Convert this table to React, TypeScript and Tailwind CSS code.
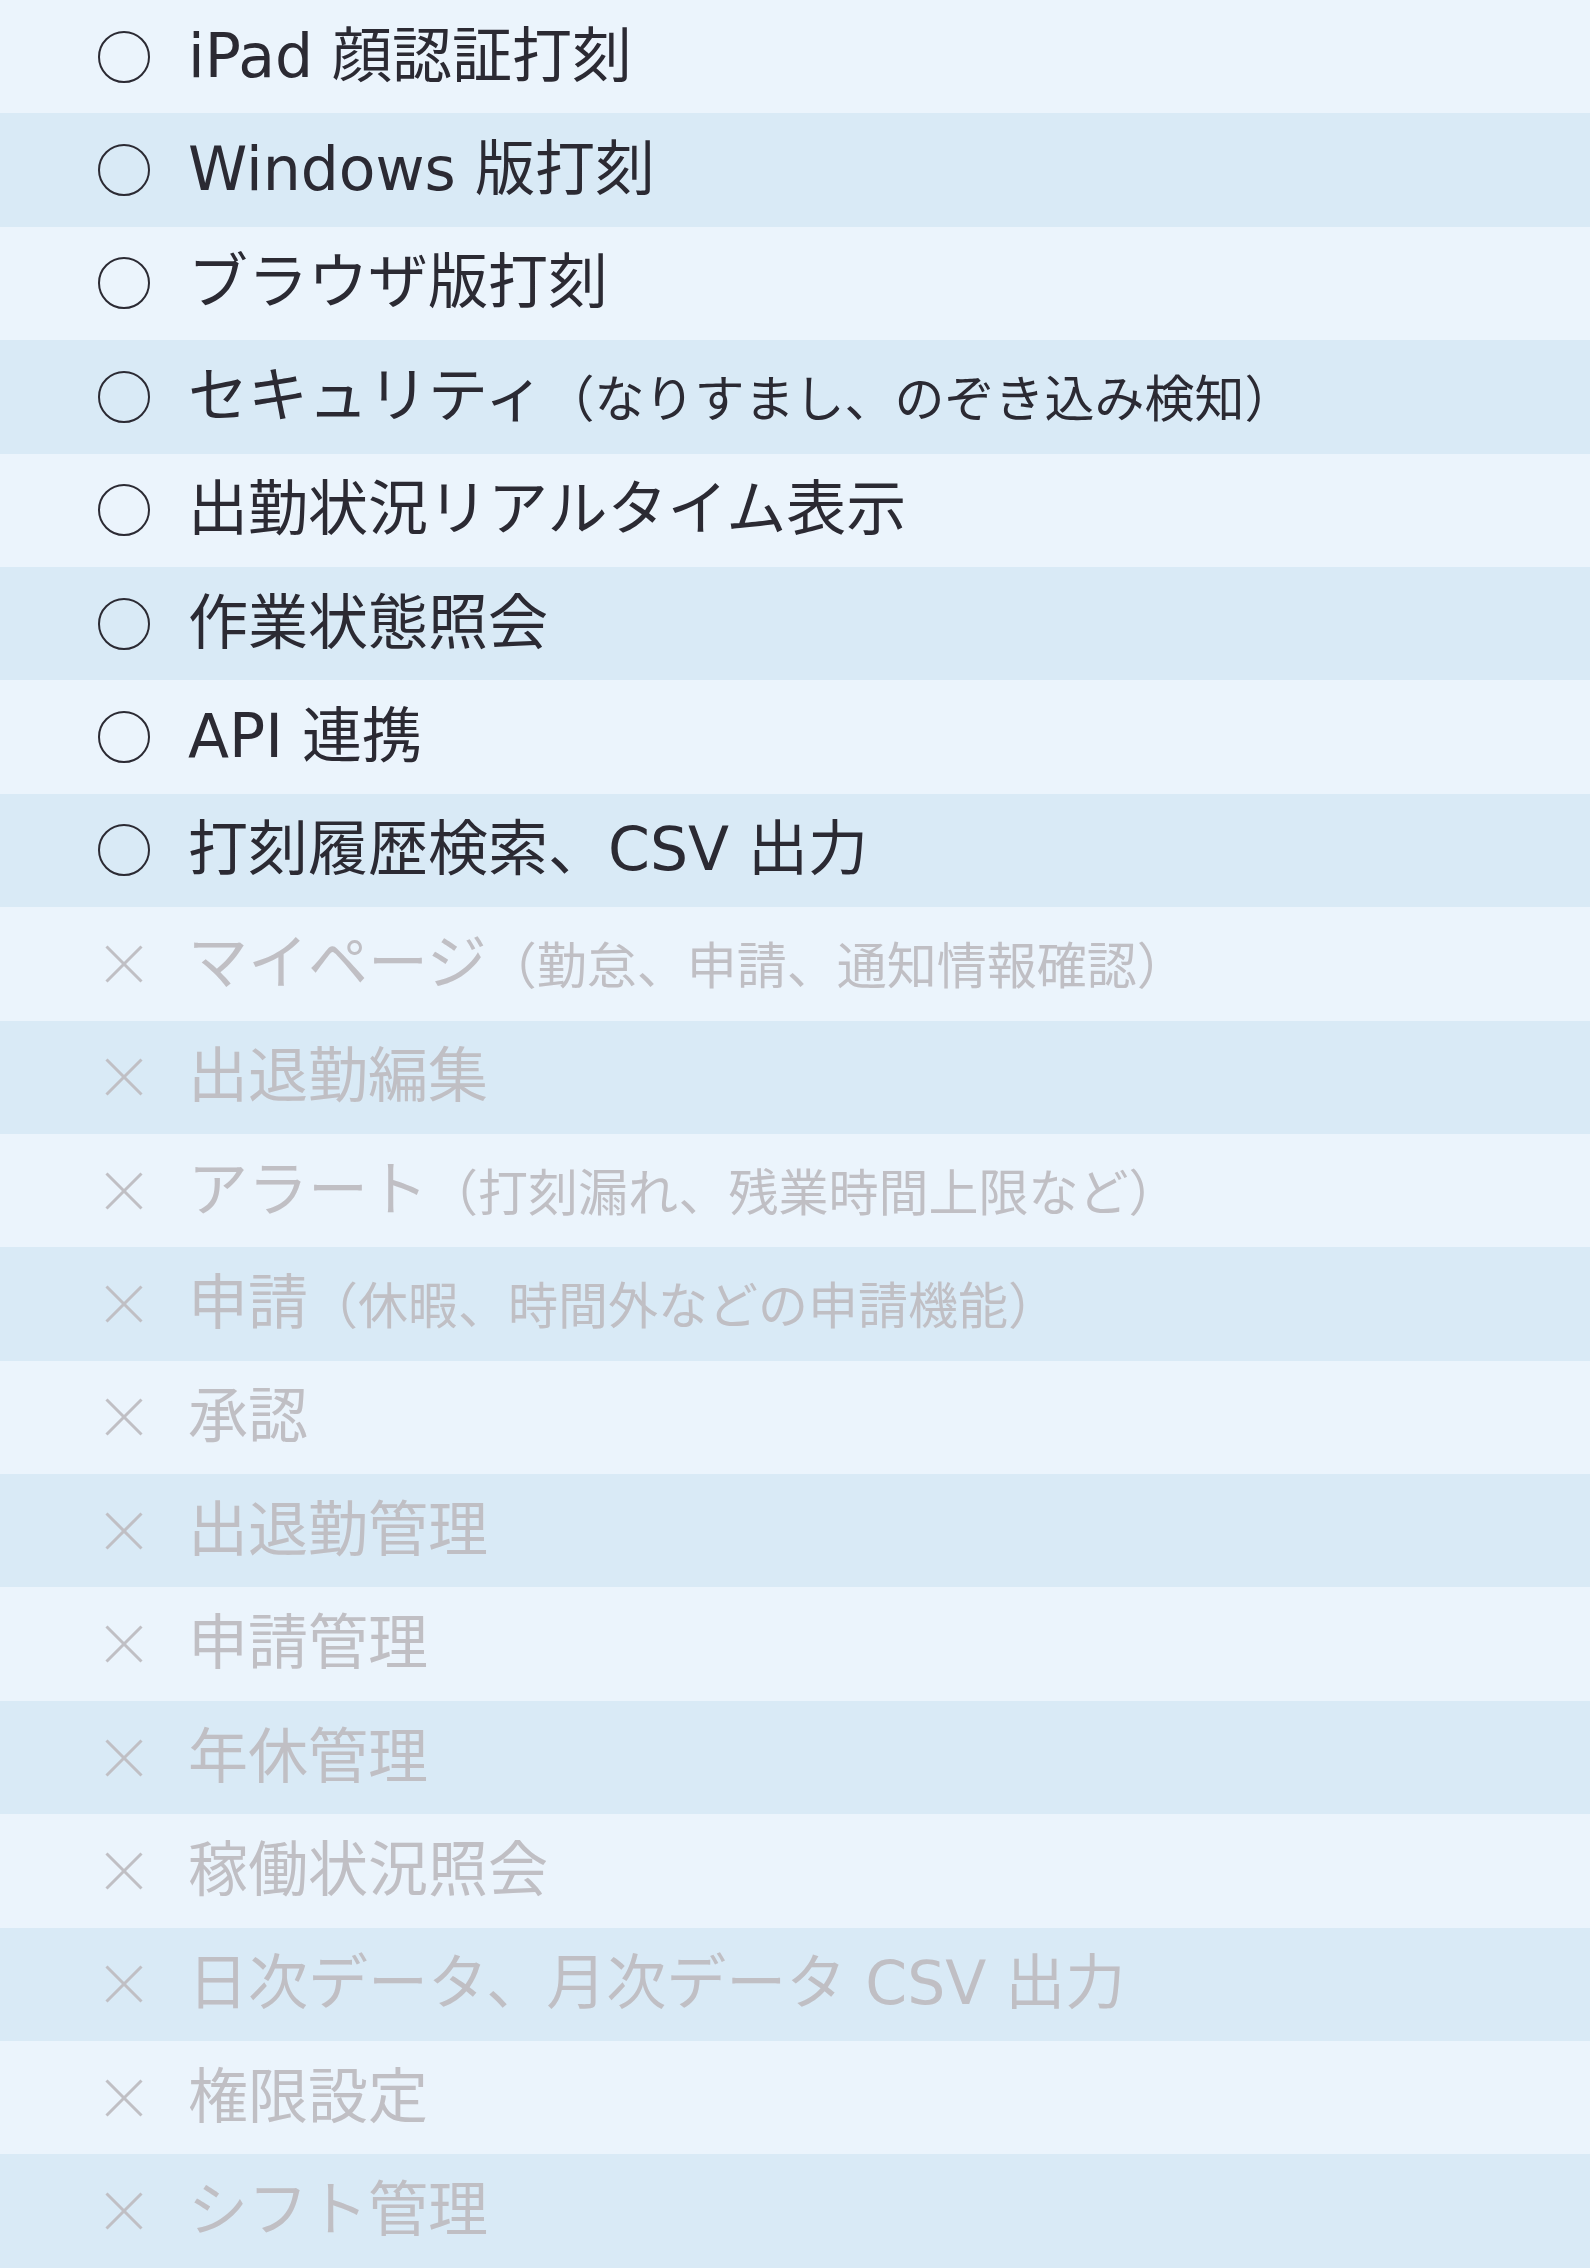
import React from "react";

type Item = { ok: boolean; main: string; sub?: string };

const items: Item[] = [
  { ok: true, main: "iPad 顔認証打刻" },
  { ok: true, main: "Windows 版打刻" },
  { ok: true, main: "ブラウザ版打刻" },
  { ok: true, main: "セキュリティ", sub: "（なりすまし、のぞき込み検知）" },
  { ok: true, main: "出勤状況リアルタイム表示" },
  { ok: true, main: "作業状態照会" },
  { ok: true, main: "API 連携" },
  { ok: true, main: "打刻履歴検索、CSV 出力" },
  { ok: false, main: "マイページ", sub: "（勤怠、申請、通知情報確認）" },
  { ok: false, main: "出退勤編集" },
  { ok: false, main: "アラート", sub: "（打刻漏れ、残業時間上限など）" },
  { ok: false, main: "申請", sub: "（休暇、時間外などの申請機能）" },
  { ok: false, main: "承認" },
  { ok: false, main: "出退勤管理" },
  { ok: false, main: "申請管理" },
  { ok: false, main: "年休管理" },
  { ok: false, main: "稼働状況照会" },
  { ok: false, main: "日次データ、月次データ CSV 出力" },
  { ok: false, main: "権限設定" },
  { ok: false, main: "シフト管理" },
];

function Marker({ ok }: { ok: boolean }) {
  return (
    <div className="w-[52px] h-[52px] flex items-center justify-center shrink-0">
      {ok ? (
        <svg width="52" height="52" viewBox="0 0 52 52">
          <circle cx="26" cy="26" r="25" fill="none" stroke="#2b2a33" strokeWidth="2" />
        </svg>
      ) : (
        <svg width="38" height="38" viewBox="0 0 38 38">
          <line x1="1.5" y1="1.5" x2="36.5" y2="36.5" stroke="#c0bfc4" strokeWidth="3" />
          <line x1="36.5" y1="1.5" x2="1.5" y2="36.5" stroke="#c0bfc4" strokeWidth="3" />
        </svg>
      )}
    </div>
  );
}

export default function App() {
  return (
    <div
      className="w-[1590px] flex flex-col"
      style={{ fontFamily: '"DejaVu Sans", "Noto Sans CJK JP", sans-serif' }}
    >
      {items.map((it, i) => (
        <div
          key={i}
          className={`h-[113.4px] flex items-center pl-[98px] ${
            i % 2 === 0 ? "bg-[#ebf4fc]" : "bg-[#d9eaf6]"
          }`}
        >
          <Marker ok={it.ok} />
          <div
            className={`ml-[38px] -translate-y-[1px] whitespace-nowrap leading-none ${
              it.ok ? "text-[#2b2a33]" : "text-[#c0bfc4]"
            }`}
          >
            <span className="text-[60px]">{it.main}</span>
            {it.sub && <span className="text-[50px]">{it.sub}</span>}
          </div>
        </div>
      ))}
    </div>
  );
}
